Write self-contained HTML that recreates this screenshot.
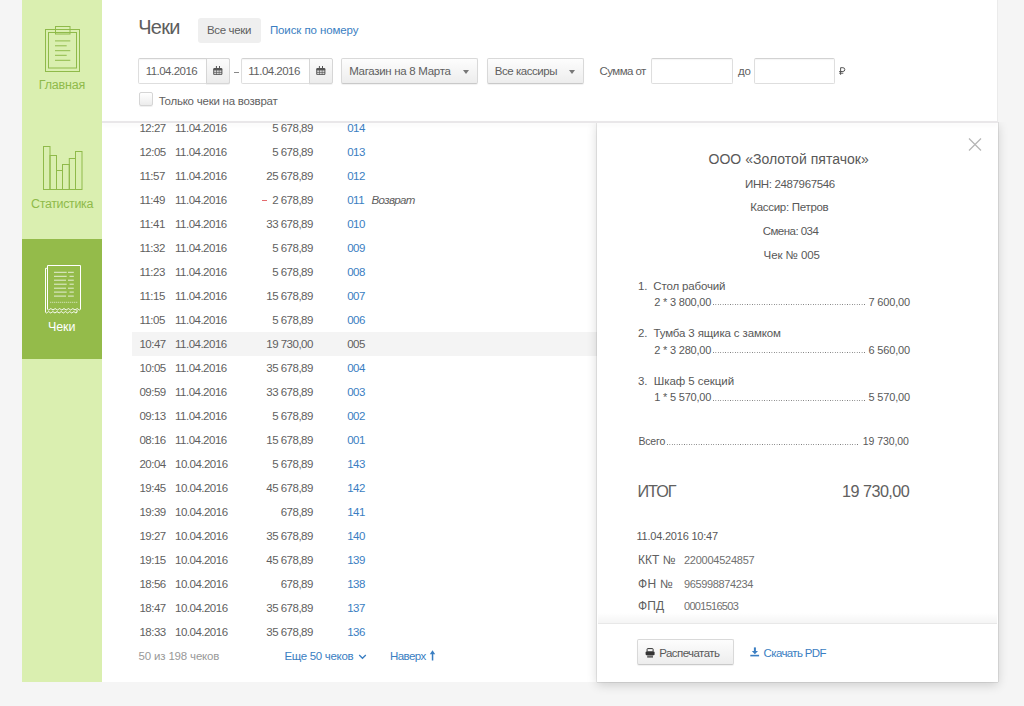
<!DOCTYPE html>
<html><head><meta charset="utf-8">
<style>
*{box-sizing:border-box;margin:0;padding:0}
html,body{width:1024px;height:706px;overflow:hidden;background:#f5f5f5;font-family:"Liberation Sans",sans-serif;color:#555;position:relative}
.a{position:absolute}
.t{position:absolute;white-space:pre;line-height:0;z-index:10}
#side{position:absolute;left:22px;top:0;width:80px;height:682px;background:#daefb0}
#act{position:absolute;left:0;top:239px;width:80px;height:120px;background:#94bb4a}
#main{position:absolute;left:102px;top:0;width:896px;height:682px;background:#fff;border-right:1px solid #ebebeb}
#hline{position:absolute;left:102px;top:121px;width:896px;height:2px;background:#e9e7e9;z-index:6;box-shadow:0 2px 4px rgba(0,0,0,.045)}
.inp{position:absolute;top:57.6px;height:26.9px;border:1px solid #dedede;border-top-color:#d2d2d2;border-radius:2px;background:#fff;box-shadow:inset 0 1px 1px rgba(0,0,0,.04)}
.addon{position:absolute;top:57.6px;height:26.9px;width:24px;border:1px solid #d6d6d6;border-radius:0 2px 2px 0;background:linear-gradient(#fbfbfb,#ececec);box-shadow:0 1px 0 rgba(0,0,0,.05)}
.btn{position:absolute;height:26px;border:1px solid #d9d9d9;border-bottom-color:#c9c9c9;border-radius:2px;background:linear-gradient(#fdfdfd,#ededed);box-shadow:0 1px 1px rgba(0,0,0,.06)}
.caret{position:absolute;top:70px;width:0;height:0;border-left:3.5px solid transparent;border-right:3.5px solid transparent;border-top:4px solid #777}
.row{position:absolute;left:132px;width:465px;height:24px}
#panel{position:absolute;left:597px;top:122px;width:401px;height:560px;background:#fff;z-index:5;box-shadow:0 0 1px rgba(0,0,0,.45),0 3px 10px 0 rgba(0,0,0,.16);clip-path:inset(0 -30px -30px -30px)}
.dots{position:absolute;height:2px;background-image:linear-gradient(to right,#777 0,#777 1px,transparent 1px);background-size:2.45px 1px;background-repeat:repeat-x;z-index:10}
svg{position:absolute;overflow:visible;z-index:10}
</style></head><body>
<div id="side"><div id="act"></div></div>

<!-- sidebar icons -->
<svg style="left:0;top:0" width="110" height="360" fill="none">
 <g stroke="#8fba4a" stroke-width="1">
  <rect x="45.5" y="29.5" width="34" height="42"/>
  <rect x="48.5" y="32.5" width="28" height="35.5"/>
  <rect x="55.5" y="26.5" width="14.5" height="7.5"/>
  <path d="M55 40.9H70.3M55 45.8H66.7M55 50.7H70.3M55 55.3H66.7M55 60.3H70.3"/>
 </g>
 <g stroke="#8fba4a" stroke-width="1">
  <rect x="43.5" y="146.5" width="6.5" height="43"/><rect x="50" y="155.5" width="6.5" height="34"/><rect x="56.5" y="170.5" width="6" height="19"/><rect x="62.5" y="164.5" width="6.8" height="25"/><rect x="69.3" y="158.5" width="6.2" height="31"/><rect x="75.5" y="151.5" width="6.5" height="38"/>
 </g>
 <g stroke="#fff" stroke-width="1">
  <path d="M47.3 268.3H45.5V312.3q1.05 1.4 2.1 0t2.1 0t2.1 0t2.1 0t2.1 0t2.1 0t2.1 0t2.1 0t2.1 0t2.1 0t2.1 0t2.1 0t2.1 0t2.1 0t2.1 0V310"/>
  <path d="M47.5 309.3V265.5H80.5V309.3q-1.1 1.4 -2.2 0t-2.2 0t-2.2 0t-2.2 0t-2.2 0t-2.2 0t-2.2 0t-2.2 0t-2.2 0t-2.2 0t-2.2 0t-2.2 0t-2.2 0t-2.2 0t-2.2 0"/>
  <path d="M54 272.3H66.7M68 272.3H73.8M54 276.3H66.7M69.5 276.3H73.8M54 280.2H66M68 280.2H73.8M54 284.2H66.7M69.5 284.2H73.8M54 288.2H66M68 288.2H73.8M54 292.1H66.7M69.5 292.1H73.8M54 296.1H66M68 296.1H73.8" stroke-width="0.9" stroke-opacity="0.85"/>
  <path d="M50 302.3H78" stroke-width="0.7" stroke-dasharray="1.3 0.7" stroke-opacity="0.8"/>
 </g>
</svg>

<div id="main"></div>
<div id="hline"></div>

<!-- header controls -->
<div class="a" style="left:198px;top:18px;width:63px;height:25px;background:#efefef;border-radius:3px"></div>
<div class="inp" style="left:138px;width:92px"></div>
<div class="addon" style="left:206px"></div>
<div class="inp" style="left:241px;width:91px"></div>
<div class="addon" style="left:308.5px"></div>
<svg style="left:0;top:0" width="1" height="1">
 <g fill="#555">
  <rect x="213.2" y="68" width="9.2" height="7" rx="1.2"/>
  <rect x="215.9" y="66" width="1" height="3"/><rect x="219" y="66" width="1" height="3"/>
  <rect x="316.2" y="68" width="9.2" height="7" rx="1.2"/>
  <rect x="318.9" y="66" width="1" height="3"/><rect x="322" y="66" width="1" height="3"/>
 </g>
 <g fill="#d4d4d4">
  <rect x="214.2" y="70.4" width="2" height="1.6"/><rect x="216.8" y="70.4" width="2" height="1.6"/><rect x="219.4" y="70.4" width="2" height="1.6"/><rect x="214.2" y="72.6" width="2" height="1.6"/><rect x="216.8" y="72.6" width="2" height="1.6"/><rect x="219.4" y="72.6" width="2" height="1.6"/><rect x="317.2" y="70.4" width="2" height="1.6"/><rect x="319.8" y="70.4" width="2" height="1.6"/><rect x="322.4" y="70.4" width="2" height="1.6"/><rect x="317.2" y="72.6" width="2" height="1.6"/><rect x="319.8" y="72.6" width="2" height="1.6"/><rect x="322.4" y="72.6" width="2" height="1.6"/>
 </g>
</svg>
<div class="a" style="left:233.7px;top:71.6px;width:5.2px;height:1px;background:#888"></div>
<div class="btn" style="left:341px;top:57.6px;height:26.9px;width:136.5px"></div>
<div class="caret" style="left:463.3px"></div>
<div class="btn" style="left:486.5px;top:57.6px;height:26.9px;width:97px"></div>
<div class="caret" style="left:568.8px"></div>
<div class="inp" style="left:651px;width:81.5px"></div>
<div class="inp" style="left:754px;width:81px"></div>
<svg style="left:0;top:0" width="1" height="1">
 <g stroke="#555" stroke-width="1" fill="none">
  <path d="M840.6 74.8V67.7H842.9a1.9 1.9 0 0 1 0 3.8H839.2M839.2 73.2H843.3"/>
 </g>
</svg>
<div class="a" style="left:138.5px;top:92.3px;width:14px;height:14px;border:1px solid #d5d5d5;border-radius:2px;background:linear-gradient(#fff,#ececec);box-shadow:0 1px 0 rgba(0,0,0,.06)"></div>

<!-- selected row -->
<div class="row" style="top:332px;background:#f4f4f4"></div>
<!-- red minus -->
<div class="a" style="left:261.7px;top:199.5px;width:5.3px;height:1.1px;background:#e46a6e;z-index:10"></div>

<!-- footer icons -->
<svg style="left:0;top:0" width="1" height="1">
 <path d="M359.2 655L362.5 658.3L365.8 655" stroke="#3a7ec2" stroke-width="1.3" fill="none"/>
 <path d="M431.8 660.6V654.2H429.8L432.5 650.3L435.2 654.2H433.3V660.6Z" fill="#3a7ec2"/>
</svg>

<div id="panel"></div>
<div class="a" style="left:598px;top:613px;width:399px;height:10px;background:linear-gradient(rgba(0,0,0,0),rgba(0,0,0,.045));z-index:6"></div>
<div class="a" style="left:598px;top:622.5px;width:399px;height:1px;background:#e8e8e8;z-index:6"></div>
<svg style="left:0;top:0" width="1" height="1">
 <path d="M969 138.5L981 150.5M981 138.5L969 150.5" stroke="#b5b5b5" stroke-width="1.2"/>
</svg>
<div class="dots" style="left:712.5px;top:304.2px;width:153px"></div>
<div class="dots" style="left:712.5px;top:352.2px;width:153px"></div>
<div class="dots" style="left:712.5px;top:399.8px;width:153px"></div>
<div class="dots" style="left:666.5px;top:444px;width:192px"></div>
<div class="btn" style="left:637.3px;top:639.2px;height:26.3px;width:96.5px;z-index:6"></div>
<svg style="left:0;top:0" width="1" height="1">
 <g fill="#333">
  <rect x="647.1" y="648.6" width="6" height="3.4" rx="0.6" fill="none" stroke="#333" stroke-width="1"/>
  <rect x="645.6" y="651.6" width="9" height="3.6" rx="1"/>
  <rect x="647.2" y="655" width="5.8" height="2.3" fill="#888"/>
  <rect x="647.2" y="656.6" width="5.8" height="0.8" fill="#333"/>
 </g>
 <g fill="#3a7ec2">
  <rect x="753.9" y="647.4" width="2" height="4"/>
  <path d="M751.8 651H758L754.9 654.2Z"/>
  <rect x="750.3" y="654.8" width="8.8" height="1.6"/>
 </g>
</svg>
<div class="t" style="left:138.30px;top:26.90px;font-size:20px;color:#5e5e5e;letter-spacing:-0.768px;">Чеки</div>
<div class="t" style="left:206.90px;top:29.90px;font-size:11.5px;color:#5f5f5f;letter-spacing:-0.333px;">Все чеки</div>
<div class="t" style="left:269.90px;top:29.80px;font-size:11.5px;color:#3a7ec2;letter-spacing:-0.092px;">Поиск по номеру</div>
<div class="t" style="left:145.70px;top:71.30px;font-size:11.5px;color:#5f5f5f;letter-spacing:-0.523px;">11.04.2016</div>
<div class="t" style="left:248.30px;top:71.30px;font-size:11.5px;color:#5f5f5f;letter-spacing:-0.512px;">11.04.2016</div>
<div class="t" style="left:349.20px;top:71.30px;font-size:11.5px;color:#5f5f5f;letter-spacing:-0.304px;">Магазин на 8 Марта</div>
<div class="t" style="left:494.70px;top:71.30px;font-size:11.5px;color:#5f5f5f;letter-spacing:-0.451px;">Все кассиры</div>
<div class="t" style="left:599.60px;top:71.30px;font-size:11.5px;color:#5f5f5f;letter-spacing:-0.582px;">Сумма от</div>
<div class="t" style="left:738.10px;top:71.30px;font-size:11.5px;color:#5f5f5f;letter-spacing:-0.410px;">до</div>
<div class="t" style="left:158.70px;top:100.70px;font-size:11.5px;color:#5f5f5f;letter-spacing:-0.241px;">Только чеки на возврат</div>
<div class="t" style="left:139.40px;top:128.20px;font-size:11.5px;color:#5f5f5f;letter-spacing:-0.500px;">12:27</div>
<div class="t" style="left:175.00px;top:128.20px;font-size:11.5px;color:#5f5f5f;letter-spacing:-0.500px;">11.04.2016</div>
<div class="t" style="left:272.13px;top:128.20px;font-size:11.5px;color:#5f5f5f;letter-spacing:-0.500px;">5 678,89</div>
<div class="t" style="left:347.20px;top:128.20px;font-size:11.5px;color:#3a7ec2;letter-spacing:-0.500px;">014</div>
<div class="t" style="left:139.40px;top:152.20px;font-size:11.5px;color:#5f5f5f;letter-spacing:-0.500px;">12:05</div>
<div class="t" style="left:175.00px;top:152.20px;font-size:11.5px;color:#5f5f5f;letter-spacing:-0.500px;">11.04.2016</div>
<div class="t" style="left:272.13px;top:152.20px;font-size:11.5px;color:#5f5f5f;letter-spacing:-0.500px;">5 678,89</div>
<div class="t" style="left:347.20px;top:152.20px;font-size:11.5px;color:#3a7ec2;letter-spacing:-0.500px;">013</div>
<div class="t" style="left:139.40px;top:176.20px;font-size:11.5px;color:#5f5f5f;letter-spacing:-0.500px;">11:57</div>
<div class="t" style="left:175.00px;top:176.20px;font-size:11.5px;color:#5f5f5f;letter-spacing:-0.500px;">11.04.2016</div>
<div class="t" style="left:266.24px;top:176.20px;font-size:11.5px;color:#5f5f5f;letter-spacing:-0.500px;">25 678,89</div>
<div class="t" style="left:347.20px;top:176.20px;font-size:11.5px;color:#3a7ec2;letter-spacing:-0.500px;">012</div>
<div class="t" style="left:139.40px;top:200.20px;font-size:11.5px;color:#5f5f5f;letter-spacing:-0.500px;">11:49</div>
<div class="t" style="left:175.00px;top:200.20px;font-size:11.5px;color:#5f5f5f;letter-spacing:-0.500px;">11.04.2016</div>
<div class="t" style="left:272.13px;top:200.20px;font-size:11.5px;color:#5f5f5f;letter-spacing:-0.500px;">2 678,89</div>
<div class="t" style="left:347.20px;top:200.20px;font-size:11.5px;color:#3a7ec2;letter-spacing:-0.500px;">011</div>
<div class="t" style="left:139.40px;top:224.20px;font-size:11.5px;color:#5f5f5f;letter-spacing:-0.500px;">11:41</div>
<div class="t" style="left:175.00px;top:224.20px;font-size:11.5px;color:#5f5f5f;letter-spacing:-0.500px;">11.04.2016</div>
<div class="t" style="left:266.24px;top:224.20px;font-size:11.5px;color:#5f5f5f;letter-spacing:-0.500px;">33 678,89</div>
<div class="t" style="left:347.20px;top:224.20px;font-size:11.5px;color:#3a7ec2;letter-spacing:-0.500px;">010</div>
<div class="t" style="left:139.40px;top:248.20px;font-size:11.5px;color:#5f5f5f;letter-spacing:-0.500px;">11:32</div>
<div class="t" style="left:175.00px;top:248.20px;font-size:11.5px;color:#5f5f5f;letter-spacing:-0.500px;">11.04.2016</div>
<div class="t" style="left:272.13px;top:248.20px;font-size:11.5px;color:#5f5f5f;letter-spacing:-0.500px;">5 678,89</div>
<div class="t" style="left:347.20px;top:248.20px;font-size:11.5px;color:#3a7ec2;letter-spacing:-0.500px;">009</div>
<div class="t" style="left:139.40px;top:272.20px;font-size:11.5px;color:#5f5f5f;letter-spacing:-0.500px;">11:23</div>
<div class="t" style="left:175.00px;top:272.20px;font-size:11.5px;color:#5f5f5f;letter-spacing:-0.500px;">11.04.2016</div>
<div class="t" style="left:272.13px;top:272.20px;font-size:11.5px;color:#5f5f5f;letter-spacing:-0.500px;">5 678,89</div>
<div class="t" style="left:347.20px;top:272.20px;font-size:11.5px;color:#3a7ec2;letter-spacing:-0.500px;">008</div>
<div class="t" style="left:139.40px;top:296.20px;font-size:11.5px;color:#5f5f5f;letter-spacing:-0.500px;">11:15</div>
<div class="t" style="left:175.00px;top:296.20px;font-size:11.5px;color:#5f5f5f;letter-spacing:-0.500px;">11.04.2016</div>
<div class="t" style="left:266.24px;top:296.20px;font-size:11.5px;color:#5f5f5f;letter-spacing:-0.500px;">15 678,89</div>
<div class="t" style="left:347.20px;top:296.20px;font-size:11.5px;color:#3a7ec2;letter-spacing:-0.500px;">007</div>
<div class="t" style="left:139.40px;top:320.20px;font-size:11.5px;color:#5f5f5f;letter-spacing:-0.500px;">11:05</div>
<div class="t" style="left:175.00px;top:320.20px;font-size:11.5px;color:#5f5f5f;letter-spacing:-0.500px;">11.04.2016</div>
<div class="t" style="left:272.13px;top:320.20px;font-size:11.5px;color:#5f5f5f;letter-spacing:-0.500px;">5 678,89</div>
<div class="t" style="left:347.20px;top:320.20px;font-size:11.5px;color:#3a7ec2;letter-spacing:-0.500px;">006</div>
<div class="t" style="left:139.40px;top:344.20px;font-size:11.5px;color:#5f5f5f;letter-spacing:-0.500px;">10:47</div>
<div class="t" style="left:175.00px;top:344.20px;font-size:11.5px;color:#5f5f5f;letter-spacing:-0.500px;">11.04.2016</div>
<div class="t" style="left:266.24px;top:344.20px;font-size:11.5px;color:#5f5f5f;letter-spacing:-0.500px;">19 730,00</div>
<div class="t" style="left:347.20px;top:344.20px;font-size:11.5px;color:#5f5f5f;letter-spacing:-0.500px;">005</div>
<div class="t" style="left:139.40px;top:368.20px;font-size:11.5px;color:#5f5f5f;letter-spacing:-0.500px;">10:05</div>
<div class="t" style="left:175.00px;top:368.20px;font-size:11.5px;color:#5f5f5f;letter-spacing:-0.500px;">11.04.2016</div>
<div class="t" style="left:266.24px;top:368.20px;font-size:11.5px;color:#5f5f5f;letter-spacing:-0.500px;">35 678,89</div>
<div class="t" style="left:347.20px;top:368.20px;font-size:11.5px;color:#3a7ec2;letter-spacing:-0.500px;">004</div>
<div class="t" style="left:139.40px;top:392.20px;font-size:11.5px;color:#5f5f5f;letter-spacing:-0.500px;">09:59</div>
<div class="t" style="left:175.00px;top:392.20px;font-size:11.5px;color:#5f5f5f;letter-spacing:-0.500px;">11.04.2016</div>
<div class="t" style="left:266.24px;top:392.20px;font-size:11.5px;color:#5f5f5f;letter-spacing:-0.500px;">33 678,89</div>
<div class="t" style="left:347.20px;top:392.20px;font-size:11.5px;color:#3a7ec2;letter-spacing:-0.500px;">003</div>
<div class="t" style="left:139.40px;top:416.20px;font-size:11.5px;color:#5f5f5f;letter-spacing:-0.500px;">09:13</div>
<div class="t" style="left:175.00px;top:416.20px;font-size:11.5px;color:#5f5f5f;letter-spacing:-0.500px;">11.04.2016</div>
<div class="t" style="left:272.13px;top:416.20px;font-size:11.5px;color:#5f5f5f;letter-spacing:-0.500px;">5 678,89</div>
<div class="t" style="left:347.20px;top:416.20px;font-size:11.5px;color:#3a7ec2;letter-spacing:-0.500px;">002</div>
<div class="t" style="left:139.40px;top:440.20px;font-size:11.5px;color:#5f5f5f;letter-spacing:-0.500px;">08:16</div>
<div class="t" style="left:175.00px;top:440.20px;font-size:11.5px;color:#5f5f5f;letter-spacing:-0.500px;">11.04.2016</div>
<div class="t" style="left:266.24px;top:440.20px;font-size:11.5px;color:#5f5f5f;letter-spacing:-0.500px;">15 678,89</div>
<div class="t" style="left:347.20px;top:440.20px;font-size:11.5px;color:#3a7ec2;letter-spacing:-0.500px;">001</div>
<div class="t" style="left:139.40px;top:464.20px;font-size:11.5px;color:#5f5f5f;letter-spacing:-0.500px;">20:04</div>
<div class="t" style="left:175.00px;top:464.20px;font-size:11.5px;color:#5f5f5f;letter-spacing:-0.500px;">10.04.2016</div>
<div class="t" style="left:272.13px;top:464.20px;font-size:11.5px;color:#5f5f5f;letter-spacing:-0.500px;">5 678,89</div>
<div class="t" style="left:347.20px;top:464.20px;font-size:11.5px;color:#3a7ec2;letter-spacing:-0.500px;">143</div>
<div class="t" style="left:139.40px;top:488.20px;font-size:11.5px;color:#5f5f5f;letter-spacing:-0.500px;">19:45</div>
<div class="t" style="left:175.00px;top:488.20px;font-size:11.5px;color:#5f5f5f;letter-spacing:-0.500px;">10.04.2016</div>
<div class="t" style="left:266.24px;top:488.20px;font-size:11.5px;color:#5f5f5f;letter-spacing:-0.500px;">45 678,89</div>
<div class="t" style="left:347.20px;top:488.20px;font-size:11.5px;color:#3a7ec2;letter-spacing:-0.500px;">142</div>
<div class="t" style="left:139.40px;top:512.20px;font-size:11.5px;color:#5f5f5f;letter-spacing:-0.500px;">19:39</div>
<div class="t" style="left:175.00px;top:512.20px;font-size:11.5px;color:#5f5f5f;letter-spacing:-0.500px;">10.04.2016</div>
<div class="t" style="left:280.72px;top:512.20px;font-size:11.5px;color:#5f5f5f;letter-spacing:-0.500px;">678,89</div>
<div class="t" style="left:347.20px;top:512.20px;font-size:11.5px;color:#3a7ec2;letter-spacing:-0.500px;">141</div>
<div class="t" style="left:139.40px;top:536.20px;font-size:11.5px;color:#5f5f5f;letter-spacing:-0.500px;">19:27</div>
<div class="t" style="left:175.00px;top:536.20px;font-size:11.5px;color:#5f5f5f;letter-spacing:-0.500px;">10.04.2016</div>
<div class="t" style="left:266.24px;top:536.20px;font-size:11.5px;color:#5f5f5f;letter-spacing:-0.500px;">35 678,89</div>
<div class="t" style="left:347.20px;top:536.20px;font-size:11.5px;color:#3a7ec2;letter-spacing:-0.500px;">140</div>
<div class="t" style="left:139.40px;top:560.20px;font-size:11.5px;color:#5f5f5f;letter-spacing:-0.500px;">19:15</div>
<div class="t" style="left:175.00px;top:560.20px;font-size:11.5px;color:#5f5f5f;letter-spacing:-0.500px;">10.04.2016</div>
<div class="t" style="left:266.24px;top:560.20px;font-size:11.5px;color:#5f5f5f;letter-spacing:-0.500px;">45 678,89</div>
<div class="t" style="left:347.20px;top:560.20px;font-size:11.5px;color:#3a7ec2;letter-spacing:-0.500px;">139</div>
<div class="t" style="left:139.40px;top:584.20px;font-size:11.5px;color:#5f5f5f;letter-spacing:-0.500px;">18:56</div>
<div class="t" style="left:175.00px;top:584.20px;font-size:11.5px;color:#5f5f5f;letter-spacing:-0.500px;">10.04.2016</div>
<div class="t" style="left:280.72px;top:584.20px;font-size:11.5px;color:#5f5f5f;letter-spacing:-0.500px;">678,89</div>
<div class="t" style="left:347.20px;top:584.20px;font-size:11.5px;color:#3a7ec2;letter-spacing:-0.500px;">138</div>
<div class="t" style="left:139.40px;top:608.20px;font-size:11.5px;color:#5f5f5f;letter-spacing:-0.500px;">18:47</div>
<div class="t" style="left:175.00px;top:608.20px;font-size:11.5px;color:#5f5f5f;letter-spacing:-0.500px;">10.04.2016</div>
<div class="t" style="left:266.24px;top:608.20px;font-size:11.5px;color:#5f5f5f;letter-spacing:-0.500px;">35 678,89</div>
<div class="t" style="left:347.20px;top:608.20px;font-size:11.5px;color:#3a7ec2;letter-spacing:-0.500px;">137</div>
<div class="t" style="left:139.40px;top:632.20px;font-size:11.5px;color:#5f5f5f;letter-spacing:-0.500px;">18:33</div>
<div class="t" style="left:175.00px;top:632.20px;font-size:11.5px;color:#5f5f5f;letter-spacing:-0.500px;">10.04.2016</div>
<div class="t" style="left:266.24px;top:632.20px;font-size:11.5px;color:#5f5f5f;letter-spacing:-0.500px;">35 678,89</div>
<div class="t" style="left:347.20px;top:632.20px;font-size:11.5px;color:#3a7ec2;letter-spacing:-0.500px;">136</div>
<div class="t" style="left:371.50px;top:200.20px;font-size:11.5px;color:#5f5f5f;letter-spacing:-0.629px;font-style:italic">Возврат</div>
<div class="t" style="left:138.60px;top:656.00px;font-size:11.5px;color:#999;letter-spacing:-0.179px;">50 из 198 чеков</div>
<div class="t" style="left:284.40px;top:656.00px;font-size:11.5px;color:#3a7ec2;letter-spacing:-0.311px;">Еще 50 чеков</div>
<div class="t" style="left:390.00px;top:655.50px;font-size:11.5px;color:#3a7ec2;letter-spacing:-0.589px;">Наверх</div>
<div class="t" style="left:38.80px;top:84.60px;font-size:12.5px;color:#8fba4a;letter-spacing:-0.201px;">Главная</div>
<div class="t" style="left:31.00px;top:203.90px;font-size:12.5px;color:#8fba4a;letter-spacing:-0.366px;">Статистика</div>
<div class="t" style="left:47.90px;top:326.70px;font-size:12.5px;color:#ffffff;letter-spacing:-0.051px;">Чеки</div>
<div class="t" style="left:708.50px;top:158.50px;font-size:14px;color:#585858;letter-spacing:0.028px;">ООО «Золотой пятачок»</div>
<div class="t" style="left:745.00px;top:183.50px;font-size:11.5px;color:#585858;letter-spacing:-0.359px;">ИНН: 2487967546</div>
<div class="t" style="left:750.30px;top:207.00px;font-size:11.5px;color:#585858;letter-spacing:-0.296px;">Кассир: Петров</div>
<div class="t" style="left:762.70px;top:230.70px;font-size:11.5px;color:#585858;letter-spacing:-0.526px;">Смена: 034</div>
<div class="t" style="left:763.60px;top:254.70px;font-size:11.5px;color:#585858;letter-spacing:-0.089px;">Чек № 005</div>
<div class="t" style="left:638.00px;top:285.80px;font-size:11.5px;color:#585858;letter-spacing:-0.161px;">1.  Стол рабочий</div>
<div class="t" style="left:638.00px;top:333.00px;font-size:11.5px;color:#585858;letter-spacing:-0.133px;">2.  Тумба 3 ящика с замком</div>
<div class="t" style="left:638.00px;top:381.40px;font-size:11.5px;color:#585858;letter-spacing:-0.058px;">3.  Шкаф 5 секций</div>
<div class="t" style="left:654.20px;top:301.60px;font-size:11px;color:#585858;letter-spacing:-0.192px;">2 * 3 800,00</div>
<div class="t" style="left:868.50px;top:301.60px;font-size:11px;color:#585858;letter-spacing:-0.172px;">7 600,00</div>
<div class="t" style="left:654.20px;top:349.60px;font-size:11px;color:#585858;letter-spacing:-0.192px;">2 * 3 280,00</div>
<div class="t" style="left:868.50px;top:349.60px;font-size:11px;color:#585858;letter-spacing:-0.172px;">6 560,00</div>
<div class="t" style="left:654.20px;top:397.20px;font-size:11px;color:#585858;letter-spacing:-0.192px;">1 * 5 570,00</div>
<div class="t" style="left:868.50px;top:397.20px;font-size:11px;color:#585858;letter-spacing:-0.172px;">5 570,00</div>
<div class="t" style="left:638.50px;top:441.40px;font-size:10.5px;color:#585858;letter-spacing:-0.198px;">Всего</div>
<div class="t" style="left:862.80px;top:441.40px;font-size:10.5px;color:#585858;letter-spacing:-0.084px;">19 730,00</div>
<div class="t" style="left:637.50px;top:491.20px;font-size:16.2px;color:#606060;letter-spacing:-1.062px;">ИТОГ</div>
<div class="t" style="left:842.00px;top:491.20px;font-size:16.2px;color:#606060;letter-spacing:-0.526px;">19 730,00</div>
<div class="t" style="left:636.40px;top:536.20px;font-size:11px;color:#585858;letter-spacing:-0.207px;">11.04.2016 10:47</div>
<div class="t" style="left:638.00px;top:559.80px;font-size:12px;color:#606060;letter-spacing:0.039px;">ККТ №</div>
<div class="t" style="left:684.00px;top:559.80px;font-size:11px;color:#707070;letter-spacing:-0.254px;">220004524857</div>
<div class="t" style="left:638.00px;top:583.80px;font-size:12px;color:#606060;letter-spacing:0.292px;">ФН №</div>
<div class="t" style="left:684.00px;top:583.80px;font-size:11px;color:#707070;letter-spacing:-0.372px;">965998874234</div>
<div class="t" style="left:638.00px;top:605.90px;font-size:12px;color:#606060;letter-spacing:0.126px;">ФПД</div>
<div class="t" style="left:684.00px;top:605.90px;font-size:11px;color:#707070;letter-spacing:-0.707px;">0001516503</div>
<div class="t" style="left:659.20px;top:652.60px;font-size:11.5px;color:#585858;letter-spacing:-0.556px;">Распечатать</div>
<div class="t" style="left:763.60px;top:652.60px;font-size:11.5px;color:#3a7ec2;letter-spacing:-0.640px;">Скачать PDF</div>
</body></html>
